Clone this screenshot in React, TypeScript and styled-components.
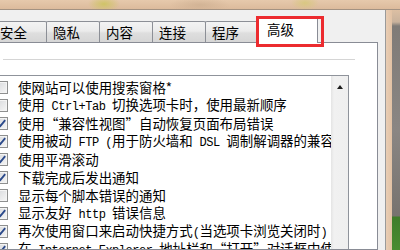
import React from 'react'
import styled, { createGlobalStyle } from 'styled-components'

type Part = string | { latin: string }

interface Option {
  checked: boolean
  parts: Array<Part>
}

const tabs = ['安全', '隐私', '内容', '连接', '程序', '高级']
const activeTab = '高级'

const options: Array<Option> = [
  { checked: false, parts: ['使网站可以使用搜索窗格*'] },
  { checked: false, parts: ['使用', { latin: ' Ctrl+Tab ' }, '切换选项卡时，使用最新顺序'] },
  { checked: true, parts: ['使用“兼容性视图”自动恢复页面布局错误'] },
  {
    checked: true,
    parts: ['使用被动', { latin: ' FTP (' }, '用于防火墙和', { latin: ' DSL ' }, '调制解调器的兼容性)'],
  },
  { checked: true, parts: ['使用平滑滚动'] },
  { checked: true, parts: ['下载完成后发出通知'] },
  { checked: false, parts: ['显示每个脚本错误的通知'] },
  { checked: true, parts: ['显示友好', { latin: ' http ' }, '错误信息'] },
  { checked: true, parts: ['再次使用窗口来启动快捷方式', { latin: '(' }, '当选项卡浏览关闭时', { latin: ')' }] },
  {
    checked: true,
    parts: ['在', { latin: ' Internet Explorer ' }, '地址栏和“打开”对话框中使用直接插入自动完成功能'],
  },
]

function App() {
  return (
    <Screen>
      <GlobalStyle />
      <TitleEdge />
      <Body>
        <Dialog>
          <TabRow>
            {tabs.map(label =>
              label === activeTab ? (
                <ActiveTab key={label}>
                  {label}
                  <Highlight />
                </ActiveTab>
              ) : (
                <Tab key={label}>{label}</Tab>
              )
            )}
          </TabRow>
          <Panel>
            <Divider />
            <ListBox>
              <List>
                {options.map((option, i) => (
                  <Row key={i}>
                    <CheckBox>
                      {option.checked && (
                        <svg width="11" height="11" viewBox="0 0 11 11">
                          <path d="M1.8 5.4 L4.3 8 L9.2 2.2" fill="none" stroke="#2b4a8b" strokeWidth="1.9" />
                        </svg>
                      )}
                    </CheckBox>
                    <Label>
                      {option.parts.map((part, j) =>
                        typeof part === 'string' ? part : <Latin key={j}>{part.latin}</Latin>
                      )}
                    </Label>
                  </Row>
                ))}
              </List>
              <ScrollBar>
                <UpArrow />
              </ScrollBar>
            </ListBox>
          </Panel>
        </Dialog>
        <FrameStrip />
        <Backdrop />
      </Body>
    </Screen>
  )
}

///////////////////////////////////////////////////////////////////////////////////

const GlobalStyle = createGlobalStyle`
  html, body {
    margin: 0;
    padding: 0;
  }
  body {
    width: 400px;
    height: 250px;
    overflow: hidden;
    background: #dcbfa3;
    font-family: "Noto Sans CJK SC", sans-serif;
  }
`

const Screen = styled.div`
  width: 400px;
  height: 250px;
  overflow: hidden;
  display: flex;
  flex-direction: column;
  background: #dcbfa3;
`

const TitleEdge = styled.div`
  height: 9px;
  flex: none;
  border-bottom: 1px solid #a39282;
  background:
    radial-gradient(ellipse 16px 8px at 104px 4px, rgba(205, 196, 96, 0.9), transparent),
    radial-gradient(ellipse 14px 7px at 305px 3px, rgba(214, 200, 120, 0.8), transparent),
    radial-gradient(ellipse 30px 8px at 200px 5px, rgba(200, 170, 140, 0.6), transparent),
    linear-gradient(#e6c9ac, #dcbb9c);
`

const Body = styled.div`
  flex: 1;
  display: flex;
  min-height: 0;
`

const Dialog = styled.div`
  width: 385px;
  flex: none;
  display: flex;
  flex-direction: column;
  padding-top: 7px;
  background: #f0f0f0;
  border-right: 1px solid #9a9a9a;
  overflow: hidden;
`

const TabRow = styled.div`
  height: 26px;
  display: flex;
  align-items: flex-end;
  margin-left: -7px;
  margin-bottom: -1px;
  flex: none;
`

const Tab = styled.div`
  box-sizing: border-box;
  width: 54px;
  height: 21px;
  margin-bottom: 1px;
  padding: 1px 0 0 6px;
  flex: none;
  border: 1px solid #8c8f96;
  border-bottom: none;
  border-radius: 2px 2px 0 0;
  background: linear-gradient(#f3f3f3, #ebebeb 45%, #dedede 55%, #d6d6d6);
  font-size: 13.45px;
  line-height: 18px;
  color: #000;
  white-space: nowrap;
  & + & {
    margin-left: -1px;
  }
`

const ActiveTab = styled.div`
  position: relative;
  box-sizing: border-box;
  width: 60px;
  height: 26px;
  margin-left: -1px;
  padding: 2px 0 0 8px;
  flex: none;
  border: 1px solid #898c95;
  border-bottom: none;
  border-radius: 2px 2px 0 0;
  background: #fff;
  font-size: 13.45px;
  line-height: 18px;
  color: #000;
  white-space: nowrap;
`

const Highlight = styled.div`
  position: absolute;
  left: -3px;
  top: -2px;
  width: 68px;
  height: 31px;
  box-sizing: border-box;
  border: 3px solid #ec2b2f;
`

const Panel = styled.div`
  flex: 1;
  display: flex;
  flex-direction: column;
  margin-left: -20px;
  margin-right: 7px;
  background: #fff;
  border: 1px solid #898c95;
  min-height: 0;
`

const Divider = styled.div`
  flex: none;
  height: 1px;
  width: 352px;
  margin: 16px 0 0 22px;
  background: #d5d5d5;
`

const ListBox = styled.div`
  flex: 1;
  display: flex;
  margin: 15px 28px 0 0;
  border: 1px solid #8f939b;
  border-bottom: none;
  min-height: 0;
`

const List = styled.div`
  flex: 1;
  min-width: 0;
  overflow: hidden;
  padding-top: 2px;
`

const Row = styled.div`
  height: 18px;
  display: flex;
  align-items: center;
  gap: 10px;
  padding-left: 13px;
  white-space: nowrap;
`

const CheckBox = styled.span`
  box-sizing: border-box;
  width: 13px;
  height: 13px;
  flex: none;
  display: flex;
  align-items: center;
  justify-content: center;
  border: 1px solid #8e8f8f;
  box-shadow: inset 0 0 0 1px #f4f4f4;
  background: linear-gradient(135deg, #d6d8db, #f6f6f6);
`

const Label = styled.span`
  font-size: 13.45px;
  line-height: 18px;
  color: #000;
`

const Latin = styled.span`
  font-family: "Liberation Mono", monospace;
  font-size: 12px;
  letter-spacing: -0.48px;
`

const ScrollBar = styled.div`
  width: 17px;
  flex: none;
  display: flex;
  justify-content: center;
  background: linear-gradient(to right, #e4e4e4, #f1f1f1 3px, #efefef);
`

const UpArrow = styled.div`
  margin-top: 9px;
  width: 0;
  height: 0;
  border-left: 3.5px solid transparent;
  border-right: 3.5px solid transparent;
  border-bottom: 4px solid #1c1c1c;
`

const FrameStrip = styled.div`
  width: 6px;
  flex: none;
  background: linear-gradient(to right, #e9cdb4, #e2c2a4);
`

const Backdrop = styled.div`
  flex: 1;
  background: linear-gradient(
    #dcbfa3 0,
    #c9b29c 12px,
    #7f7b77 16px,
    #8a8683 120px,
    #77736f 206px,
    #3f7d2a 207px,
    #4a8c31 240px
  );
`

export default App
